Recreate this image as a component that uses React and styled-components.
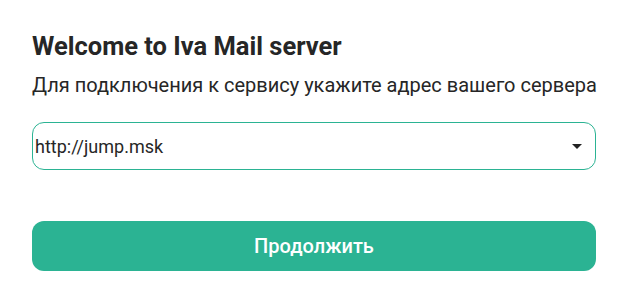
import styled, { createGlobalStyle } from "styled-components";

const GlobalStyle = createGlobalStyle`
    html, body {
        margin: 0;
        padding: 0;
        background: #ffffff;
    }
    body {
        font-family: Roboto, "Liberation Sans", Arial, sans-serif;
        color: #262626;
    }
`;

const Container = styled.div`
    width: 564px;
    padding: 31px 0 0 32px;
    display: flex;
    flex-direction: column;
`;

const Title = styled.h1`
    margin: 0;
    font-size: 25.5px;
    font-weight: 700;
    line-height: 30px;
    color: #262626;
`;

const Subtitle = styled.p`
    margin: 13px 0 0 0;
    font-size: 20px;
    line-height: 23px;
    white-space: nowrap;
    color: #262626;
`;

const Select = styled.div`
    box-sizing: border-box;
    margin-top: 25px;
    height: 48px;
    border: 1px solid #2bb393;
    border-radius: 12px;
    display: flex;
    align-items: center;
    justify-content: space-between;
    padding: 0 13px 0 2px;
    font-size: 18px;
    color: #262626;
    cursor: pointer;
`;

const Caret = styled.span`
    width: 0;
    height: 0;
    border-left: 5px solid transparent;
    border-right: 5px solid transparent;
    border-top: 5px solid #222;
`;

const Button = styled.button`
    margin-top: 51px;
    height: 50px;
    border: none;
    border-radius: 12px;
    background-color: #2bb393;
    color: #ffffff;
    font-family: Roboto, "Liberation Sans", Arial, sans-serif;
    font-size: 20px;
    font-weight: 500;
    cursor: pointer;
`;

const App = () => {
    return (
        <>
            <GlobalStyle />
            <Container>
                <Title>Welcome to Iva Mail server</Title>
                <Subtitle>Для подключения к сервису укажите адрес вашего сервера</Subtitle>
                <Select>
                    <span>http://jump.msk</span>
                    <Caret />
                </Select>
                <Button>Продолжить</Button>
            </Container>
        </>
    );
};

export default App;
